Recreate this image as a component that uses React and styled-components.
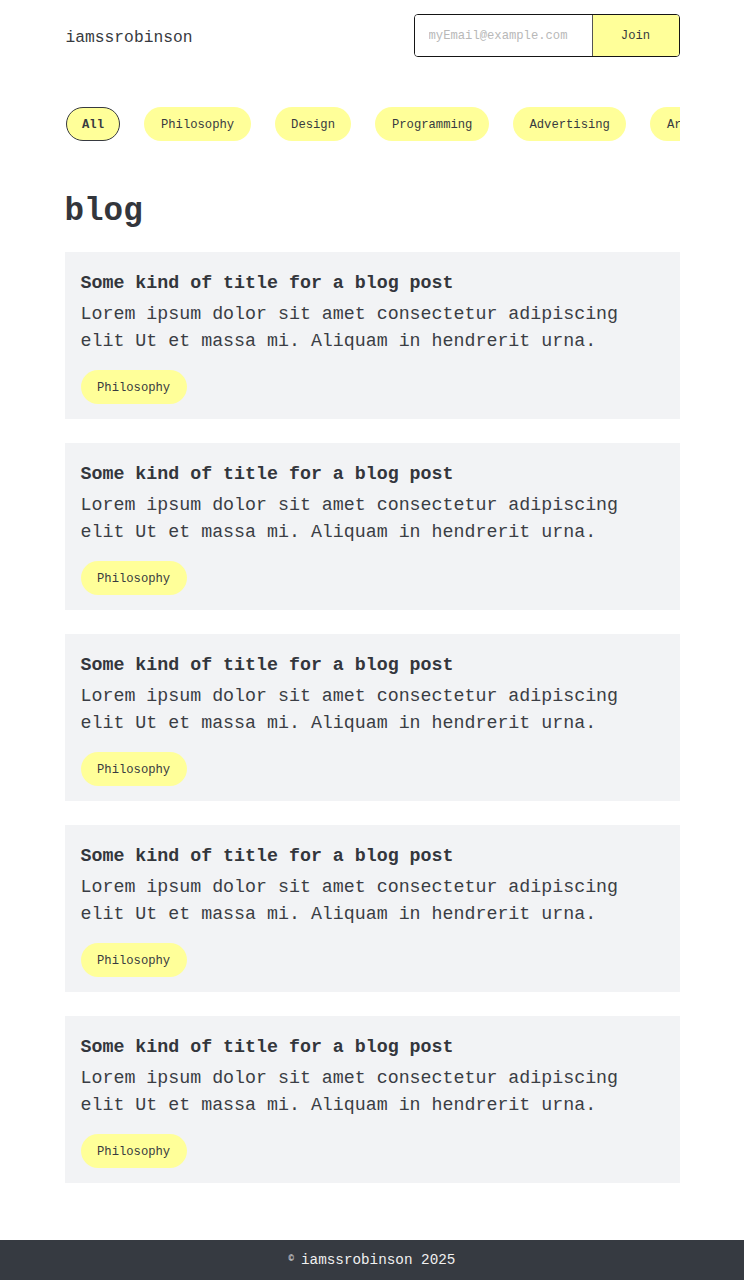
import React from "react";
import styled, { createGlobalStyle } from "styled-components";

const GlobalStyle = createGlobalStyle`
  * { box-sizing: border-box; }
  html, body { margin: 0; padding: 0; background: #ffffff; }
  body {
    font-family: "Liberation Mono", "DejaVu Sans Mono", monospace;
    color: #373a40;
  }
`;

const Page = styled.div`
  min-height: 100vh;
  display: flex;
  flex-direction: column;
`;

const Container = styled.main`
  width: 615px;
  margin: 0 auto;
  flex: 1;
  padding-bottom: 57px;
`;

const Header = styled.header`
  display: flex;
  justify-content: space-between;
  align-items: center;
  padding: 14px 0;
`;

const Logo = styled.a`
  font-size: 16.3px;
  color: #373a40;
  text-decoration: none;
  padding-left: 1px;
  padding-top: 3px;
`;

const SubscribeForm = styled.form`
  display: flex;
  height: 43px;
  border: 1px solid #151515;
  border-radius: 4px;
  overflow: hidden;
`;

const EmailInput = styled.input`
  width: 177px;
  border: none;
  outline: none;
  padding: 1px 14px 0;
  font-family: inherit;
  font-size: 12.2px;
  color: #373a40;
  background: #ffffff;
  &::placeholder { color: #b8b8b8; }
`;

const JoinButton = styled.button`
  width: 87px;
  border: none;
  border-left: 1px solid #555;
  background: #ffff99;
  font-family: inherit;
  font-size: 12.2px;
  padding-top: 1px;
  color: #373a40;
  cursor: pointer;
`;

const FilterBar = styled.nav`
  margin-top: 36px;
  padding-left: 1px;
  display: flex;
  gap: 24px;
  overflow: hidden;
`;

const FilterPill = styled.button`
  flex: none;
  height: 34px;
  padding: 2px 15.5px 0;
  border-radius: 17px;
  border: 1px solid ${(p) => (p.$active ? "#373a40" : "transparent")};
  background: #ffff99;
  font-family: inherit;
  font-size: 12.2px;
  font-weight: ${(p) => (p.$active ? 700 : 400)};
  color: #373a40;
  cursor: pointer;
`;

const Heading = styled.h1`
  margin: 53px 0 22px;
  font-size: 32.6px;
  line-height: 36px;
  font-weight: 700;
  color: #33363c;
`;

const PostList = styled.div`
  display: flex;
  flex-direction: column;
  gap: 24px;
`;

const PostCard = styled.article`
  display: flex;
  flex-direction: column;
  align-items: flex-start;
  background: #f2f3f5;
  padding: 18px 16px 15px;
`;

const PostTitle = styled.h2`
  margin: 0 0 4px;
  font-size: 18.3px;
  line-height: 27px;
  font-weight: 700;
  color: #33363c;
`;

const PostExcerpt = styled.p`
  margin: 0;
  font-size: 18.3px;
  line-height: 27px;
  color: #3a3d44;
`;

const Tag = styled.span`
  display: flex;
  align-items: center;
  margin-top: 15px;
  height: 34px;
  padding: 1px 16.5px 0;
  border-radius: 17px;
  background: #ffff99;
  font-size: 12.2px;
  color: #373a40;
`;

const Footer = styled.footer`
  height: 40px;
  background: #363a41;
  color: #f0f0f0;
  display: flex;
  align-items: center;
  justify-content: center;
  font-size: 14.3px;
`;

const Copy = styled.sup`
  font-size: 9px;
  margin-right: 7px;
  position: relative;
  top: -1px;
`;

const filters = ["All", "Philosophy", "Design", "Programming", "Advertising", "Art", "Music"];

const posts = Array.from({ length: 5 }, (_, i) => ({
  id: i,
  title: "Some kind of title for a blog post",
  excerpt:
    "Lorem ipsum dolor sit amet consectetur adipiscing elit Ut et massa mi. Aliquam in hendrerit urna.",
  tag: "Philosophy",
}));

export default function App() {
  return (
    <Page>
      <GlobalStyle />
      <Container>
        <Header>
          <Logo href="#">iamssrobinson</Logo>
          <SubscribeForm onSubmit={(e) => e.preventDefault()}>
            <EmailInput type="email" placeholder="myEmail@example.com" />
            <JoinButton type="submit">Join</JoinButton>
          </SubscribeForm>
        </Header>
        <FilterBar>
          {filters.map((f, i) => (
            <FilterPill key={f} $active={i === 0}>
              {f}
            </FilterPill>
          ))}
        </FilterBar>
        <Heading>blog</Heading>
        <PostList>
          {posts.map((p) => (
            <PostCard key={p.id}>
              <PostTitle>{p.title}</PostTitle>
              <PostExcerpt>{p.excerpt}</PostExcerpt>
              <Tag>{p.tag}</Tag>
            </PostCard>
          ))}
        </PostList>
      </Container>
      <Footer>
        <Copy>©</Copy>iamssrobinson 2025
      </Footer>
    </Page>
  );
}
